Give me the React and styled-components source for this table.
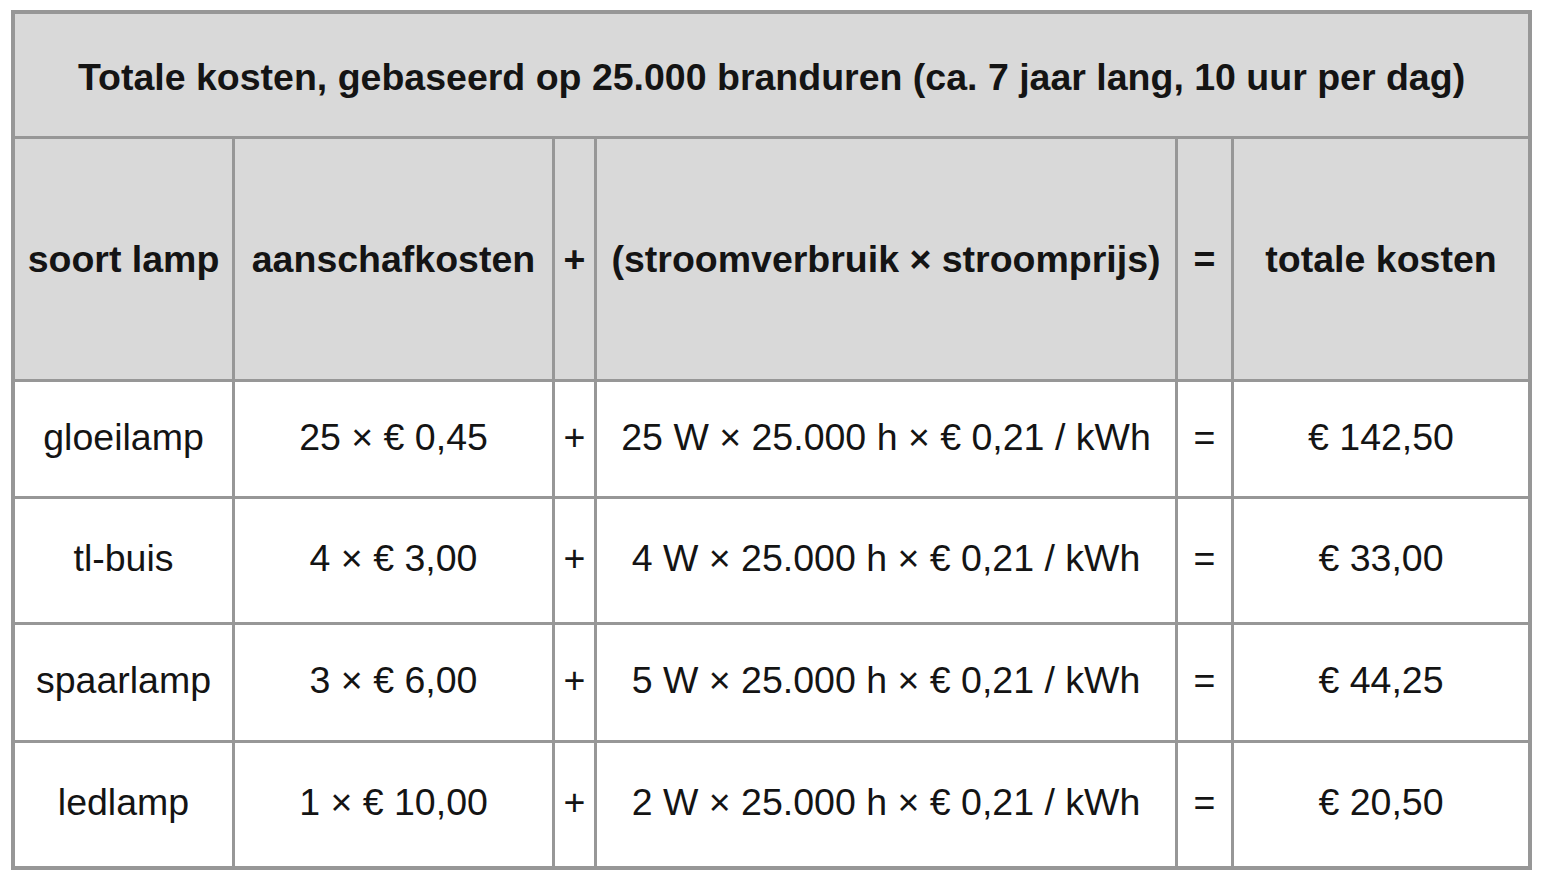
import * as React from 'react';
import styled, { createGlobalStyle } from 'styled-components';

const GlobalStyle = createGlobalStyle`
    html, body {
        margin: 0;
        padding: 0;
        background: #fff;
    }
    body {
        font-family: "Liberation Sans", Arial, sans-serif;
        color: #141414;
    }
`;

const Page = styled.div`
    padding: 10px 0 0 11px;
`;

const Grid = styled.div`
    display: grid;
    width: 1521px;
    box-sizing: border-box;
    grid-template-columns: 217px 317px 39px 578px 53px 294px;
    grid-template-rows: 122px 240px 114px 123px 115px 123px;
    gap: 3px;
    border: 4px solid #979797;
    background: #979797;
`;

const Cell = styled.div`
    display: flex;
    align-items: center;
    justify-content: center;
    background: ${(p) => (p.head ? '#d9d9d9' : '#fff')};
    font-size: 37.5px;
    font-weight: ${(p) => (p.head ? 700 : 400)};
    white-space: nowrap;
    padding-bottom: ${(p) => (p.head ? '0' : '4px')};
`;

const Title = styled(Cell)`
    grid-column: 1 / -1;
    padding-top: 4px;
`;

const columns = [
    'soort lamp',
    'aanschafkosten',
    '+',
    '(stroomverbruik × stroomprijs)',
    '=',
    'totale kosten',
];

const rows = [
    ['gloeilamp', '25 × € 0,45', '+', '25 W × 25.000 h × € 0,21 / kWh', '=', '€ 142,50'],
    ['tl-buis', '4 × € 3,00', '+', '4 W × 25.000 h × € 0,21 / kWh', '=', '€ 33,00'],
    ['spaarlamp', '3 × € 6,00', '+', '5 W × 25.000 h × € 0,21 / kWh', '=', '€ 44,25'],
    ['ledlamp', '1 × € 10,00', '+', '2 W × 25.000 h × € 0,21 / kWh', '=', '€ 20,50'],
];

const App = () => (
    <Page>
        <GlobalStyle />
        <Grid>
            <Title head>
                Totale kosten, gebaseerd op 25.000 branduren (ca. 7 jaar lang, 10 uur per dag)
            </Title>
            {columns.map((c) => (
                <Cell head key={c}>
                    {c}
                </Cell>
            ))}
            {rows.map((r) =>
                r.map((v, i) => <Cell key={r[0] + i}>{v}</Cell>)
            )}
        </Grid>
    </Page>
);

export default App;
